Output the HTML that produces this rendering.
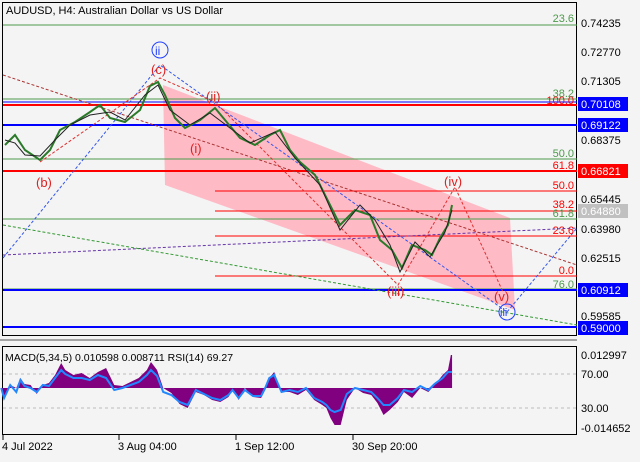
<!DOCTYPE html>
<html><head><meta charset="utf-8"><style>
body{margin:0;background:#f4f4f4;width:640px;height:457px;overflow:hidden;font-family:"Liberation Sans",sans-serif}
svg text{font-family:"Liberation Sans",sans-serif;font-size:11px}
</style></head><body>
<svg width="640" height="457" viewBox="0 0 640 457">
<rect x="0" y="0" width="640" height="457" fill="#f4f4f4"/>
<rect x="2.5" y="2.5" width="574" height="333" fill="#f4f4f4" stroke="#000"/>
<rect x="2.5" y="346.5" width="574" height="88" fill="#f4f4f4" stroke="#000"/>
<line x1="0" y1="340" x2="577" y2="340" stroke="#555"/>
<polygon points="163,85 510,218 515,310 165,185" fill="#ffb0bd" opacity="0.85"/>
<g stroke-width="1">
<line x1="3" y1="25" x2="577" y2="25" stroke="#4c9a4c"/>
<line x1="3" y1="99" x2="577" y2="99" stroke="#4c9a4c"/>
<line x1="3" y1="105" x2="577" y2="105" stroke="#f00" stroke-width="2"/>
<line x1="3" y1="102" x2="577" y2="102" stroke="#00f"/>
<line x1="3" y1="125" x2="577" y2="125" stroke="#00f" stroke-width="2"/>
<line x1="3" y1="159" x2="577" y2="159" stroke="#4c9a4c"/>
<line x1="3" y1="171" x2="577" y2="171" stroke="#f00" stroke-width="2"/>
<line x1="215" y1="191" x2="577" y2="191" stroke="#f00"/>
<line x1="215" y1="211" x2="577" y2="211" stroke="#f00"/>
<line x1="3" y1="219" x2="577" y2="219" stroke="#4c9a4c"/>
<line x1="215" y1="236" x2="577" y2="236" stroke="#f00"/>
<line x1="215" y1="276" x2="577" y2="276" stroke="#f00"/>
<line x1="3" y1="289" x2="577" y2="289" stroke="#4c9a4c"/>
<line x1="3" y1="290" x2="577" y2="290" stroke="#00f" stroke-width="2"/>
<line x1="3" y1="327" x2="577" y2="327" stroke="#00f" stroke-width="2"/>
</g>
<g fill="none" stroke-dasharray="3,2" stroke-width="1">
<polyline points="3,258 160,65 507,312 577,228" stroke="#3355ee"/>
<polyline points="3,255 577,228" stroke="#6633aa"/>
<polyline points="3,225 577,325" stroke="#339933"/>
<polyline points="3,75 577,265" stroke="#aa3333"/>
<polyline points="40,162 160,78 215,102 398,285 455,187 503,292" stroke="#e03030"/>
</g>
<polyline fill="none" stroke="#2a7a2a" stroke-width="2" points="5,145 15,135 25,150 40,160 50,150 60,130 75,122 90,112 100,105 110,118 125,122 140,110 150,86 158,82 165,95 175,118 185,128 200,120 215,108 225,120 240,138 255,145 270,135 280,130 290,150 300,162 315,175 325,195 340,225 355,210 370,215 380,240 392,250 402,268 412,245 425,250 432,255 440,238 448,225 452,205"/>
<polyline fill="none" stroke="#222" stroke-width="1" points="5,140 15,143 25,155 40,156 55,140 70,125 90,115 110,112 125,120 145,95 158,85 170,110 190,125 210,113 230,128 250,143 275,132 295,158 320,185 340,230 360,205 375,220 390,245 400,272 415,242 430,257 445,232 452,210"/>
<g>
<text x="36" y="187" style="font-size:13px;fill:#e02020">(b)</text>
<text x="151" y="74" style="font-size:13px;fill:#e02020">(c)</text>
<text x="206" y="101" style="font-size:13px;fill:#e02020">(ii)</text>
<text x="190" y="153" style="font-size:13px;fill:#e02020">(i)</text>
<text x="387" y="296" style="font-size:13px;fill:#e02020">(iii)</text>
<text x="444" y="186" style="font-size:13px;fill:#e02020">(iv)</text>
<text x="494" y="301" style="font-size:13px;fill:#e02020">(v)</text>
</g>
<circle cx="160" cy="50" r="8" fill="none" stroke="#2040ff"/>
<text x="155" y="55" style="font-size:12px;fill:#2040ff">ii</text>
<circle cx="507" cy="312" r="8" fill="none" stroke="#2040ff"/>
<text x="500" y="316" style="font-size:11px;fill:#2040ff">iii</text>
<g style="font-size:11px">
<text x="574" y="22" text-anchor="end" fill="#4c9a4c">23.6</text>
<text x="574" y="97" text-anchor="end" fill="#4c9a4c">38.2</text>
<text x="574" y="104" text-anchor="end" fill="#f00">100.0</text>
<text x="574" y="157" text-anchor="end" fill="#4c9a4c">50.0</text>
<text x="574" y="169" text-anchor="end" fill="#f00">61.8</text>
<text x="574" y="189" text-anchor="end" fill="#f00">50.0</text>
<text x="574" y="208" text-anchor="end" fill="#f00">38.2</text>
<text x="574" y="217" text-anchor="end" fill="#4c9a4c">61.8</text>
<text x="574" y="234" text-anchor="end" fill="#f00">23.6</text>
<text x="574" y="274" text-anchor="end" fill="#f00">0.0</text>
<text x="574" y="288" text-anchor="end" fill="#4c9a4c">76.0</text>
</g>
<text x="6" y="14" fill="#000">AUDUSD, H4:  Australian Dollar vs US Dollar</text>
<g fill="#000">
<text x="581" y="27">0.74235</text>
<text x="581" y="56">0.72770</text>
<text x="581" y="85">0.71305</text>
<text x="581" y="144">0.68375</text>
<text x="581" y="203">0.65445</text>
<text x="581" y="233">0.63980</text>
<text x="581" y="262">0.62515</text>
<text x="581" y="320">0.59585</text>
</g>
<rect x="578" y="97" width="50" height="14" fill="#0000ff"/><text x="581" y="108" fill="#fff">0.70108</text>
<rect x="578" y="118" width="50" height="14" fill="#0000ff"/><text x="581" y="129" fill="#fff">0.69122</text>
<rect x="578" y="164" width="50" height="14" fill="#ff0000"/><text x="581" y="175" fill="#fff">0.66821</text>
<rect x="578" y="204" width="50" height="14" fill="#c0c0c0"/><text x="581" y="215" fill="#fff">0.64880</text>
<rect x="578" y="283" width="50" height="14" fill="#0000ff"/><text x="581" y="294" fill="#fff">0.60912</text>
<rect x="578" y="321" width="50" height="14" fill="#0000ff"/><text x="581" y="332" fill="#fff">0.59000</text>
<line x1="3" y1="374" x2="577" y2="374" stroke="#bbb" stroke-dasharray="3,3"/>
<line x1="3" y1="408" x2="577" y2="408" stroke="#bbb" stroke-dasharray="3,3"/>
<g transform="scale(0.136,1)">
<polygon fill="#800080" points="9,389 30,400 75,385 120,388 150,378 180,384 225,385 270,394 315,385 360,383 405,375 450,363 480,370 540,375 600,373 660,378 720,372 780,368 840,385 900,386 960,382 1020,378 1080,370 1110,362 1155,370 1200,388 1260,393 1320,404 1380,408 1440,392 1500,395 1560,400 1620,402 1680,397 1710,390 1755,400 1800,388 1860,397 1920,398 1950,390 1980,378 2016,372 2070,392 2130,392 2190,395 2250,390 2310,400 2370,405 2400,408 2430,418 2460,425 2505,425 2550,400 2610,388 2670,393 2730,395 2775,403 2820,415 2865,410 2925,402 2970,392 3030,398 3090,388 3150,392 3195,385 3255,375 3294,370 3315,355 3324,355 3324,388 9,388"/>
<polyline fill="none" stroke="#2288ff" stroke-width="2" vector-effect="non-scaling-stroke" points="9,388 30,398 75,385 120,392 150,380 180,386 225,388 270,392 315,385 360,386 405,378 450,370 480,374 540,378 600,378 660,380 720,375 780,378 840,390 900,388 960,385 1020,382 1080,375 1110,370 1155,376 1200,392 1260,395 1320,402 1380,405 1440,390 1500,394 1560,398 1620,400 1680,395 1710,390 1755,398 1800,390 1860,396 1920,396 1950,388 1980,378 2016,375 2070,392 2130,390 2190,392 2250,388 2310,398 2370,402 2400,405 2430,410 2460,412 2505,410 2550,394 2610,388 2670,390 2730,392 2775,398 2820,405 2865,405 2925,398 2970,390 3030,392 3090,386 3150,390 3195,384 3255,378 3294,372 3324,372"/>
</g>
<text x="5" y="361" fill="#000" style="font-size:10.5px">MACD(5,34,5) 0.010598 0.008711 RSI(14) 69.27</text>
<g fill="#000">
<text x="581" y="359">0.012997</text>
<text x="581" y="378">70.00</text>
<text x="581" y="412">30.00</text>
<text x="581" y="432">-0.014652</text>
</g>
<g stroke="#000"><line x1="3" y1="435" x2="3" y2="440"/><line x1="119" y1="435" x2="119" y2="440"/><line x1="236" y1="435" x2="236" y2="440"/><line x1="353" y1="435" x2="353" y2="440"/></g>
<g fill="#000">
<text x="2" y="450">4 Jul 2022</text>
<text x="118" y="450">3 Aug 04:00</text>
<text x="235" y="450">1 Sep 12:00</text>
<text x="352" y="450">30 Sep 20:00</text>
</g>
</svg>
</body></html>
